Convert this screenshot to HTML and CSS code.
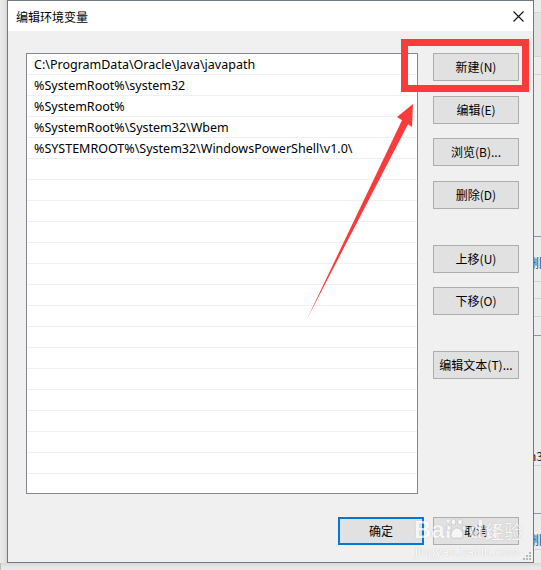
FILE: index.html
```html
<!DOCTYPE html>
<html lang="zh-CN">
<head>
<meta charset="utf-8">
<title>编辑环境变量</title>
<link rel="stylesheet" href="styles.css">
</head>
<body>
<div class="screen">
  <div class="gutter-left"></div>
  <div class="dialog">
    <div class="titlebar">
      <span class="title">编辑环境变量</span>
      <svg class="close" width="11" height="11" viewBox="0 0 11 11"><path d="M0.5 0.5 L10.5 10.5 M10.5 0.5 L0.5 10.5" stroke="#111" stroke-width="1.1" fill="none"/></svg>
    </div>
    <div class="body">
      <div class="main">
        <div class="list">
          <div class="row">C:\ProgramData\Oracle\Java\javapath</div>
          <div class="row">%SystemRoot%\system32</div>
          <div class="row">%SystemRoot%</div>
          <div class="row">%SystemRoot%\System32\Wbem</div>
          <div class="row">%SYSTEMROOT%\System32\WindowsPowerShell\v1.0\</div>
          <div class="row"></div><div class="row"></div><div class="row"></div><div class="row"></div>
          <div class="row"></div><div class="row"></div><div class="row"></div><div class="row"></div>
          <div class="row"></div><div class="row"></div><div class="row"></div><div class="row"></div>
          <div class="row"></div><div class="row"></div><div class="row"></div><div class="row"></div>
        </div>
        <div class="side">
          <button class="btn">新建(N)</button>
          <button class="btn m15">编辑(E)</button>
          <button class="btn m14">浏览(B)...</button>
          <button class="btn m15">删除(D)</button>
          <button class="btn m36">上移(U)</button>
          <button class="btn m14">下移(O)</button>
          <button class="btn m36">编辑文本(T)...</button>
        </div>
      </div>
      <div class="footer">
        <button class="btn btn-default">确定</button>
        <button class="btn">取消</button>
      </div>
    </div>
    <svg class="grip" width="10" height="10" viewBox="0 0 10 10">
      <rect x="7" y="1" width="2" height="2" fill="#b8b8b8"/>
      <rect x="4" y="4" width="2" height="2" fill="#b8b8b8"/>
      <rect x="7" y="4" width="2" height="2" fill="#b8b8b8"/>
      <rect x="1" y="7" width="2" height="2" fill="#b8b8b8"/>
      <rect x="4" y="7" width="2" height="2" fill="#b8b8b8"/>
      <rect x="7" y="7" width="2" height="2" fill="#b8b8b8"/>
    </svg>
  </div>
  <div class="behind">
    <div class="b-cell h13"></div>
    <div class="b-cell h44 shade"></div>
    <div class="b-cell h18"></div>
    <div class="b-cell h161 dark"></div>
    <div class="b-cell h45 glyph g1">删除</div>
    <div class="b-cell h17"></div>
    <div class="b-cell h18"></div>
    <div class="b-cell h19 dark"></div>
    <div class="b-cell h130 glyph2">n3</div>
    <div class="b-cell h48 dark"></div>
    <div class="b-cell h30 glyph g2">删除</div>
  </div>
  <div class="bottom-strip"></div>

  <svg class="annot" width="541" height="570" viewBox="0 0 541 570">
    <rect x="404.5" y="42.5" width="121" height="46" fill="none" stroke="#fa3b3b" stroke-width="7"/>
    <polygon points="413,104 412,127 408,124.3 307,319 402,120.3 397,117" fill="#fa3b3b"/>
  </svg>

  <div class="watermark">
    <span class="wm-bai">Bai</span>
    <svg class="paw" width="22" height="22" viewBox="0 0 22 22">
      <g fill="#ffffff" stroke="rgba(120,120,120,0.45)" stroke-width="0.8">
        <ellipse cx="7.5" cy="4" rx="2.4" ry="3"/>
        <ellipse cx="14" cy="4" rx="2.4" ry="3"/>
        <ellipse cx="3" cy="10" rx="2.3" ry="2.8"/>
        <ellipse cx="18.5" cy="10" rx="2.3" ry="2.8"/>
        <path d="M11 10 C7 10 4.5 15 5 18 C5.5 21 9 20 11 20 C13 20 16.5 21 17 18 C17.5 15 15 10 11 10 Z"/>
      </g>
    </svg>
    <span class="wm-du">du</span>
    <span class="wm-jy">经验</span>
    <div class="wm-url">jingyan.baidu.com</div>
  </div>
</div>
</body>
</html>
```
FILE: styles.css
```css
html, body {
  margin: 0;
  padding: 0;
}
body {
  width: 541px;
  height: 570px;
  overflow: hidden;
  background: #e8e8e8;
  font-family: "Noto Sans CJK SC", "Noto Sans", sans-serif;
  font-size: 12px;
  color: #000;
}
.screen {
  position: relative;
  width: 541px;
  height: 570px;
  display: flex;
  flex-wrap: wrap;
  align-content: flex-start;
  overflow: hidden;
}
.gutter-left {
  width: 7px;
  height: 563px;
  background: linear-gradient(to right, #ececec 0%, #e2e2e2 70%, #d6d6d6 100%);
}
.dialog {
  position: relative;
  width: 527px;
  height: 563px;
  box-sizing: border-box;
  border: 1px solid #6e7a88;
  background: #f0f0f0;
  display: flex;
  flex-direction: column;
}
.titlebar {
  height: 30px;
  background: #ffffff;
  display: flex;
  align-items: center;
  justify-content: space-between;
  padding: 0 9px 0 8px;
}
.title {
  font-size: 12px;
  line-height: 14px;
  margin-top: 1px;
}
.close {
  display: block;
}
.body {
  flex: 1;
  padding: 22px 14px 17px 18px;
  display: flex;
  flex-direction: column;
}
.main {
  display: flex;
  align-items: flex-start;
}
.list {
  width: 392px;
  height: 441px;
  box-sizing: border-box;
  border: 1px solid #828790;
  background: #ffffff;
  overflow: hidden;
}
.row {
  height: 20px;
  line-height: 21px;
  border-bottom: 1px solid #f0f0f0;
  padding-left: 7px;
  font-family: "Noto Sans", "Noto Sans CJK SC", sans-serif;
  font-size: 12.5px;
  white-space: nowrap;
  overflow: hidden;
}
.side {
  margin-left: 15px;
  width: 86px;
  display: flex;
  flex-direction: column;
}
.btn {
  width: 86px;
  height: 28px;
  box-sizing: border-box;
  border: 1px solid #adadad;
  background: #e1e1e1;
  font-family: "Noto Sans CJK SC", "Noto Sans", sans-serif;
  font-size: 12px;
  color: #000;
  padding: 0;
  margin: 0;
  line-height: 26px;
  text-align: center;
}
.m15 { margin-top: 15px; }
.m14 { margin-top: 14px; }
.m36 { margin-top: 36px; }
.footer {
  margin-top: 23px;
  display: flex;
  justify-content: flex-end;
  gap: 9px;
}
.btn-default {
  border: 2px solid #0078d7;
  line-height: 24px;
}
.grip {
  position: absolute;
  right: 1px;
  bottom: 1px;
}
.behind {
  width: 7px;
  height: 563px;
  background: #ececec;
  display: flex;
  flex-direction: column;
  overflow: hidden;
}
.b-cell {
  box-sizing: border-box;
  border-bottom: 1px solid #d4d4d4;
  overflow: hidden;
  white-space: nowrap;
  font-size: 12px;
  color: #1a3a6a;
}
.b-cell.dark { border-bottom-color: #8c96a2; }
.b-cell.shade { background: #e2e2e2; }
.glyph { text-indent: -7px; line-height: 20px; }
.g1 { padding-top: 16px; }
.g2 { padding-top: 16px; }
.glyph2 { text-indent: -5px; line-height: 20px; padding-top: 110px; color: #222; }
.h13 { height: 13px; }
.h44 { height: 44px; }
.h18 { height: 18px; }
.h161 { height: 162px; }
.h45 { height: 45px; }
.h17 { height: 17px; }
.h19 { height: 19px; }
.h130 { height: 130px; }
.h48 { height: 48px; }
.h30 { height: 36px; }
.bottom-strip {
  width: 541px;
  height: 7px;
  background: linear-gradient(to bottom, #d8d8d8 0%, #e8e8e8 60%);
  box-shadow: inset 10px 0 0 -9px #bdbdbd;
}
.annot {
  position: absolute;
  left: 0;
  top: 0;
  pointer-events: none;
}
.watermark {
  position: absolute;
  left: 414px;
  top: 516px;
  width: 110px;
  height: 44px;
  opacity: 0.7;
  pointer-events: none;
  color: #ffffff;
  text-shadow: 0 0 1px rgba(90,90,90,0.5);
}
.watermark > span, .watermark > svg {
  position: absolute;
}
.wm-bai {
  left: 0;
  top: 0;
  font-family: "Liberation Sans", sans-serif;
  font-weight: bold;
  font-size: 24px;
  line-height: 28px;
}
.paw { left: 32px; top: 2px; }
.wm-du {
  left: 55px;
  top: 0;
  font-family: "Liberation Sans", sans-serif;
  font-weight: bold;
  font-size: 24px;
  line-height: 28px;
}
.wm-jy {
  left: 71px;
  top: 3px;
  font-family: "Noto Sans CJK SC", sans-serif;
  font-size: 19px;
  line-height: 24px;
}
.wm-url {
  position: absolute;
  left: 1px;
  top: 29px;
  font-family: "Liberation Sans", sans-serif;
  font-size: 12.5px;
  line-height: 14px;
  letter-spacing: 0.2px;
}
```
